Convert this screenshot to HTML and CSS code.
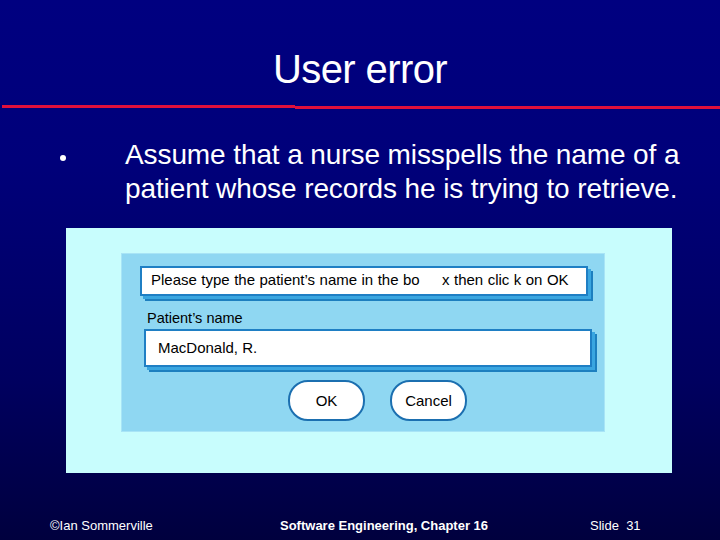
FILE: index.html
```html
<!DOCTYPE html>
<html>
<head>
<meta charset="utf-8">
<link rel="stylesheet" href="styles.css">
</head>
<body>
<div class="slide">
  <h1 class="title">User error</h1>
  <div class="rule"><span class="rule-left"></span><span class="rule-right"></span></div>
  <div class="bullet-row">
    <span class="dot"></span>
    <p class="bullet-text">Assume that a nurse misspells the name of a patient whose records he is trying to retrieve.</p>
  </div>
  <div class="figure">
    <div class="dialog">
      <div class="field field-msg">Please type the patient’s name in the bo&nbsp;&nbsp;&nbsp;&nbsp;&nbsp;x then clic k on OK</div>
      <div class="label">Patient’s name</div>
      <div class="field field-input">MacDonald, R.</div>
      <div class="buttons">
        <div class="btn">OK</div>
        <div class="btn">Cancel</div>
      </div>
    </div>
  </div>
  <div class="footer">
    <span class="f-left">©Ian Sommerville</span>
    <span class="f-mid">Software Engineering, Chapter 16</span>
    <span class="f-right">Slide&nbsp; 31</span>
  </div>
</div>
</body>
</html>
```

FILE: styles.css
```css
html, body {
  margin: 0;
  padding: 0;
}
body {
  width: 720px;
  height: 540px;
  overflow: hidden;
  font-family: "Liberation Sans", Arial, sans-serif;
}
.slide {
  width: 720px;
  height: 540px;
  background: linear-gradient(to bottom, #000080 0%, #00007a 30%, #000060 70%, #00003e 100%);
  color: #fff;
  display: flex;
  flex-direction: column;
}
.title {
  margin: 0;
  padding-top: 47px;
  height: 45px;
  font-weight: normal;
  font-size: 40px;
  line-height: 45px;
  text-align: center;
  letter-spacing: -0.6px;
}
.rule {
  margin-top: 13px;
  height: 5px;
  display: flex;
  padding-left: 2px;
}
.rule-left {
  width: 293px;
  height: 3px;
  background: #e0103c;
}
.rule-right {
  flex: 1;
  height: 3px;
  margin-top: 1px;
  background: #e0103c;
}
.bullet-row {
  display: flex;
  margin-top: 28px;
  padding-left: 60px;
}
.dot {
  width: 6px;
  height: 6px;
  border-radius: 50%;
  background: #fff;
  margin-top: 17px;
  flex: none;
}
.bullet-text {
  margin: 0 0 0 59px;
  width: 590px;
  font-size: 28px;
  line-height: 34px;
  letter-spacing: -0.1px;
}
.figure {
  margin: 22px 0 0 66px;
  width: 606px;
  height: 245px;
  background: #c8fdfd;
  box-sizing: border-box;
  padding: 25px 0 0 55px;
}
.dialog {
  width: 484px;
  height: 179px;
  background: #8fd7f2;
  border: 1px solid #a8e4f6;
  box-sizing: border-box;
  padding: 12px 0 0 18px;
  color: #000;
}
.field {
  background: #fff;
  border: 2px solid #1f7fc4;
  box-sizing: border-box;
  box-shadow: 3px 3px 0 #3aa6e0, 5px 5px 0 #1d7fbf;
  font-size: 15px;
}
.field-msg {
  width: 448px;
  height: 30px;
  line-height: 24px;
  padding-left: 9px;
  word-spacing: 0.3px;
}
.label {
  margin: 14px 0 0 7px;
  font-size: 14.5px;
  line-height: 17px;
  height: 17px;
}
.field-input {
  margin: 2px 0 0 4px;
  width: 448px;
  height: 38px;
  line-height: 34px;
  padding-left: 12px;
}
.buttons {
  display: flex;
  gap: 25px;
  margin: 13px 0 0 148px;
}
.btn {
  width: 77px;
  height: 41px;
  box-sizing: border-box;
  border: 2px solid #1b6fb0;
  border-radius: 20px;
  background: #fff;
  text-align: center;
  line-height: 37px;
  font-size: 15px;
}
.footer {
  margin-top: auto;
  height: 22px;
  font-size: 13px;
  display: flex;
  align-items: flex-start;
}
.f-left {
  margin-left: 50px;
  width: 230px;
}
.f-mid {
  font-weight: bold;
  width: 310px;
}
```
